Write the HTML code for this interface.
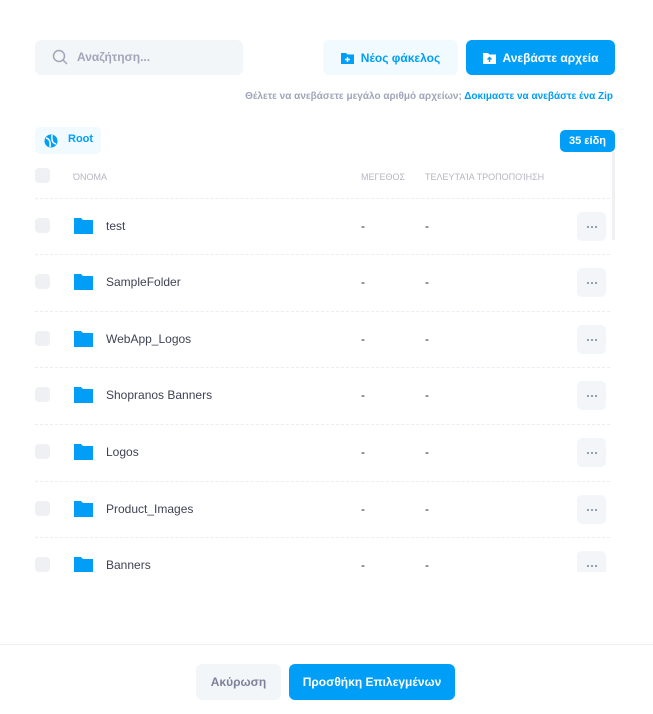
<!DOCTYPE html>
<html><head><meta charset="utf-8"><style>
*{box-sizing:border-box;margin:0;padding:0}
body{width:653px;height:714px;background:#fff;font-family:"Liberation Sans",sans-serif;position:relative;overflow:hidden;color:#3f4254}
.a{position:absolute}
.search{left:35px;top:40px;width:208px;height:35px;background:#f3f6f9;border-radius:6px}
.btn{border-radius:6px;font-size:12px;font-weight:bold;display:flex;align-items:center;justify-content:center;gap:7px}
.cb{width:15px;height:15px;background:#eef0f4;border-radius:4px}
.sep{left:35px;width:575px;border-top:1px dashed #ebedf3}
.dots{width:29px;height:29px;background:#f3f6f9;border-radius:5px;display:flex;align-items:center;justify-content:center;gap:2px}
.dots i{width:2px;height:2px;background:#7e8299;border-radius:1px}
.name{font-size:12px;color:#3f4254}
.dash{font-size:12px;color:#181c32}
</style></head><body>
<div class="a search"></div>
<svg class="a" style="left:52px;top:49px" width="17" height="17" viewBox="0 0 17 17"><circle cx="7" cy="7" r="5.5" fill="none" stroke="#a1a5b7" stroke-width="1.5"/><line x1="11" y1="11" x2="15" y2="15" stroke="#a1a5b7" stroke-width="1.5"/></svg>
<div class="a" style="left:77px;top:50px;font-size:12px;color:#a1a5b7;font-weight:bold">Αναζήτηση...</div>
<div class="a btn" style="left:323px;top:40px;width:135px;height:35px;background:#f1faff;color:#009ef7">
<svg width="13" height="12" viewBox="0 0 13 12"><path d="M0 1h5l1.5 1.5H13V12H0z" fill="#009ef7"/><path d="M6.5 5v5M4 7.5h5" stroke="#fff" stroke-width="1.4"/></svg>Νέος φάκελος</div>
<div class="a btn" style="left:466px;top:40px;width:149px;height:35px;background:#009ef7;color:#fff">
<svg width="13" height="12" viewBox="0 0 13 12"><path d="M0 1h5l1.5 1.5H13V12H0z" fill="#fff"/><path d="M6.5 10V5.5M4.5 7.5l2-2 2 2" stroke="#009ef7" stroke-width="1.4" fill="none"/></svg>Ανεβάστε αρχεία</div>
<div class="a" style="right:40px;top:91px;font-size:10px;font-weight:bold;color:#a1a5b7">Θέλετε να ανεβάσετε μεγάλο αριθμό αρχείων; <span style="color:#009ef7">Δοκιμαστε να ανεβάστε ένα Zip</span></div>
<div class="a" style="left:35px;top:127px;width:66px;height:27px;background:#f1faff;border-radius:5px"></div>
<svg class="a" style="left:43px;top:133px" width="16" height="16" viewBox="0 0 16 16"><circle cx="8" cy="8" r="6.5" fill="#009ef7"/><path d="M3 5q5 1 4 9M13 11q-5-1-4-9" stroke="#fff" stroke-width="1.5" fill="none"/></svg>
<div class="a" style="left:68px;top:133px;font-size:11px;font-weight:bold;color:#009ef7">Root</div>
<div class="a" style="left:560px;top:130px;width:55px;height:22px;background:#009ef7;border-radius:5px;color:#fff;font-size:11px;font-weight:bold;text-align:center;line-height:22px">35 είδη</div>
<div class="a" style="left:612px;top:152px;width:3px;height:88px;background:#eef0f4"></div>
<div class="a cb" style="left:35px;top:168px"></div>
<div class="a" style="left:73px;top:172px;font-size:9px;color:#b5b5c3">ΌΝΟΜΑ</div>
<div class="a" style="left:361px;top:172px;font-size:9px;color:#b5b5c3">ΜΕΓΕΘΟΣ</div>
<div class="a" style="left:425px;top:172px;font-size:9px;color:#b5b5c3">ΤΕΛΕΥΤΑΊΑ ΤΡΟΠΟΠΟΊΗΣΗ</div>
<div style="position:absolute;left:0;top:0;width:653px;height:572px;overflow:hidden">
<div class="a sep" style="top:198px"></div>
<div class="a sep" style="top:254px"></div>
<div class="a sep" style="top:311px"></div>
<div class="a sep" style="top:367px"></div>
<div class="a sep" style="top:424px"></div>
<div class="a sep" style="top:481px"></div>
<div class="a sep" style="top:537px"></div>
<script>
const n=["test","SampleFolder","WebApp_Logos","Shopranos Banners","Logos","Product_Images","Banners"];
const ys=[226,282,339,395,452,509,565];
n.forEach((t,i)=>{const y=ys[i];document.write(
`<div class="a cb" style="left:35px;top:${y-8}px"></div>
<svg class="a" style="left:74px;top:${y-8}px" width="19" height="16" viewBox="0 0 19 16"><path d="M0 0h7l2 2h10v14H0z" fill="#009ef7"/></svg>
<div class="a name" style="left:106px;top:${y-7}px">${t}</div>
<div class="a dash" style="left:361px;top:${y-7}px">-</div>
<div class="a dash" style="left:425px;top:${y-7}px">-</div>
<div class="a dots" style="left:577px;top:${y-14}px"><i></i><i></i><i></i></div>`)});
</script>
</div>
<div class="a" style="left:0;top:644px;width:653px;border-top:1px solid #eff2f5"></div>
<div class="a btn" style="left:196px;top:664px;width:85px;height:36px;background:#f3f6f9;color:#7e8299">Ακύρωση</div>
<div class="a btn" style="left:289px;top:664px;width:166px;height:36px;background:#009ef7;color:#fff">Προσθήκη Επιλεγμένων</div>
</body></html>
